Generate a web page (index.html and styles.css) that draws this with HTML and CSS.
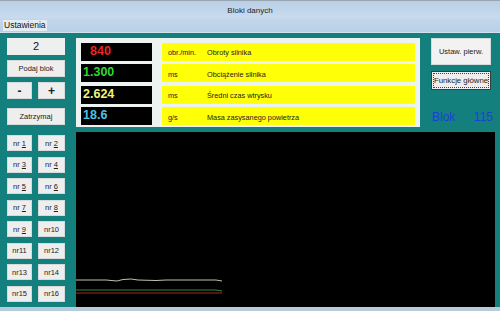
FILE: index.html
```html
<!DOCTYPE html>
<html lang="pl">
<head>
    <meta charset="UTF-8">
    <title>Bloki danych</title>
    <link rel="stylesheet" href="styles.css">
</head>
<body>

    <div class="titlebar">Bloki danych</div>
    <div class="menubar"><span class="menu-item">Ustawienia</span></div>

    <div class="client">
        <div class="side">
            <div class="block-no">2</div>
            <button class="btn">Podaj blok</button>
            <div class="pair">
                <button class="btn big">-</button>
                <button class="btn big">+</button>
            </div>
            <button class="btn stop">Zatrzymaj</button>

            <div class="nr-grid">
                <button class="btn">nr <u>1</u></button>
                <button class="btn">nr <u>2</u></button>
                <button class="btn">nr <u>3</u></button>
                <button class="btn">nr <u>4</u></button>
                <button class="btn">nr <u>5</u></button>
                <button class="btn">nr <u>6</u></button>
                <button class="btn">nr <u>7</u></button>
                <button class="btn">nr <u>8</u></button>
                <button class="btn">nr <u>9</u></button>
                <button class="btn">nr10</button>
                <button class="btn">nr11</button>
                <button class="btn">nr12</button>
                <button class="btn">nr13</button>
                <button class="btn">nr14</button>
                <button class="btn">nr15</button>
                <button class="btn">nr16</button>
            </div>
        </div>

        <div class="content">
            <div class="top">
                <div class="panel">
                    <div class="row">
                        <div class="value red indent">840</div>
                        <div class="label"><span class="unit">obr./min.</span>Obroty silnika</div>
                    </div>
                    <div class="row">
                        <div class="value green">1.300</div>
                        <div class="label"><span class="unit">ms</span>Obciążenie silnika</div>
                    </div>
                    <div class="row">
                        <div class="value yellow">2.624</div>
                        <div class="label"><span class="unit">ms</span>Średni czas wtrysku</div>
                    </div>
                    <div class="row">
                        <div class="value cyan">18.6</div>
                        <div class="label"><span class="unit">g/s</span>Masa zasysanego powietrza</div>
                    </div>
                </div>

                <div class="actions">
                    <button class="btn tall">Ustaw. pierw.</button>
                    <button class="btn default">Funkcje główne</button>
                    <div class="blok"><span>Blok</span><span>115</span></div>
                </div>
            </div>

            <div class="chart">
                <svg width="419" height="175" viewBox="0 0 419 175">
                    <polyline fill="none" stroke="#c2c1ae" stroke-width="1"
                        points="0,148 20,148 30,148 41,149 47,147.5 55,147 62,148 80,148.5 90,148 100,148 112,148 125,148 140,148 146,149" />
                    <polyline fill="none" stroke="#2f8a3c" stroke-width="1"
                        points="0,158 140,158 146,159" />
                    <polyline fill="none" stroke="#a8262a" stroke-width="1"
                        points="0,161 146,161" />
                </svg>
            </div>
        </div>
    </div>

    <div class="taskbar"></div>

</body>
</html>
```

FILE: styles.css
```css
body {
    margin: 0;
    width: 500px;
    height: 311px;
    overflow: hidden;
    font-family: 'Liberation Sans', Arial, sans-serif;
    background-color: #13807d;
}

.titlebar {
    height: 18px;
    box-sizing: border-box;
    padding-top: 2px;
    border-top: 1px solid #98a5b2;
    background: linear-gradient(#bacfe5, #c8dbef);
    text-align: center;
    font-size: 8px;
    line-height: 16px;
    color: #1e1e1e;
}

.menubar {
    height: 15px;
    box-sizing: border-box;
    padding: 0 3px;
    display: flex;
    align-items: center;
    background: linear-gradient(#c4d8ec, #b8cfe7);
    border-bottom: 1px solid #d2e1ee;
}

.menu-item {
    height: 11px;
    padding: 0 1px;
    background-color: #e4ecf3;
    font-size: 8.5px;
    line-height: 11px;
    color: #111;
}

.client {
    height: 274px;
    box-sizing: border-box;
    padding: 5px 5px 0 7px;
    display: flex;
    gap: 11px;
}

/* left column */
.side {
    width: 58px;
    display: flex;
    flex-direction: column;
}

.block-no {
    height: 17px;
    background-color: #eef0ef;
    text-align: center;
    font-size: 11px;
    line-height: 17px;
    color: #111;
}

.btn {
    height: 17px;
    padding: 0;
    border: 1px solid #d6dada;
    background-color: #eeeeee;
    font-family: inherit;
    font-size: 7.5px;
    color: #222;
    white-space: nowrap;
}

.side > .btn {
    margin-top: 5px;
}

.side > .stop {
    margin-top: 9px;
}

.pair {
    margin-top: 5px;
    display: grid;
    grid-template-columns: 25px 27px;
    column-gap: 6px;
}

.big {
    font-size: 12px;
    font-weight: bold;
}

.nr-grid {
    margin-top: 10px;
    display: grid;
    grid-template-columns: 25px 27px;
    grid-template-rows: repeat(8, 16px);
    column-gap: 6px;
    row-gap: 5.57px;
}

.nr-grid .btn {
    height: 16px;
}

/* data panel */
.content {
    flex: 1;
    display: flex;
    flex-direction: column;
    gap: 5px;
}

.top {
    height: 89px;
    display: flex;
    justify-content: space-between;
}

.panel {
    width: 344px;
    box-sizing: border-box;
    padding: 5px 5px 2px;
    background-color: #edf3f1;
    display: flex;
    flex-direction: column;
    gap: 3.67px;
}

.row {
    height: 18px;
    display: flex;
    gap: 10px;
}

.value {
    width: 71px;
    box-sizing: border-box;
    padding-left: 2px;
    background-color: #000;
    font-size: 12.5px;
    font-weight: bold;
    line-height: 17px;
}

.indent { padding-left: 9px; }
.red { color: #e8261e; }
.green { color: #30d832; }
.yellow { color: #f2f27c; }
.cyan { color: #48c4e4; }

.label {
    flex: 1;
    display: flex;
    align-items: center;
    padding: 2px 0 0 6px;
    box-sizing: border-box;
    background-color: #ffff08;
    font-size: 7.3px;
    color: #222;
}

.unit {
    width: 39px;
}

/* right buttons */
.actions {
    width: 60px;
    margin-right: 4px;
    display: flex;
    flex-direction: column;
}

.tall {
    height: 27px;
    background-color: #f2f2f2;
}

.default {
    margin-top: 6px;
    height: 19px;
    border: 1px solid #3c3c3c;
    outline: 1px dotted #444;
    outline-offset: -3px;
    font-size: 7.8px;
}

.blok {
    margin: 20px -2px 0 1px;
    display: flex;
    justify-content: space-between;
    font-size: 12px;
    line-height: 14px;
    color: #1d3fd6;
}

.chart {
    height: 175px;
    background-color: #000;
}

.chart svg {
    display: block;
}

.taskbar {
    height: 4px;
    background-color: #b6cbdc;
}
```
